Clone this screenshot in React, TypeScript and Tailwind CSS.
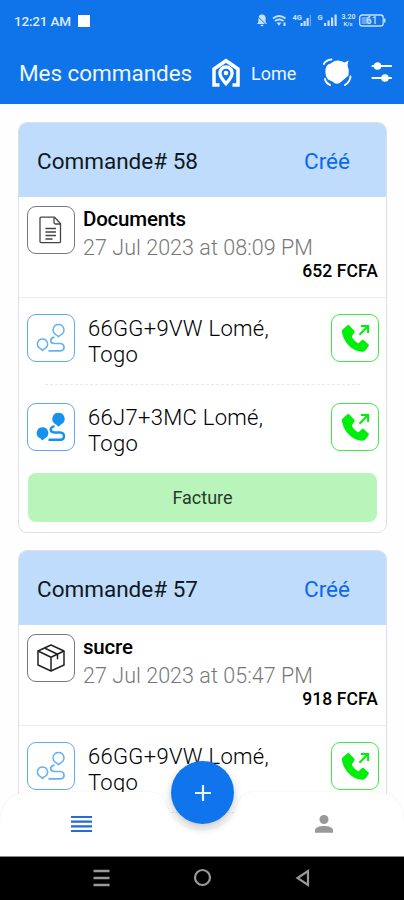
import type { ReactNode } from "react"

const orders = [
  {
    id: 58,
    title: "Documents",
    date: "27 Jul 2023 at 08:09 PM",
    price: "652 FCFA",
    kind: "doc",
    pickup: "66GG+9VW",
    dropoff: "66J7+3MC",
  },
  {
    id: 57,
    title: "sucre",
    date: "27 Jul 2023 at 05:47 PM",
    price: "918 FCFA",
    kind: "box",
    pickup: "66GG+9VW",
    dropoff: null,
  },
]

const StatusBar = () => (
  <div className="flex h-[42px] items-center pl-[14px] pr-[17px] text-[13.5px] text-[#dcebff]">
    <span className="w-[60px] whitespace-nowrap font-medium tracking-[-0.2px]">12:21 AM</span>
    <span className="ml-[4px] h-[12px] w-[12px] bg-white" />
    <svg className="ml-auto" width="132" height="16" viewBox="0 0 132 16" fill="#c9e0ff" fontFamily="Roboto">
      <path d="M7 1.5a3.600 3.600 0 0 1 3.600 3.600V9l1.400 2H2l1.400-2V5.100A3.600 3.600 0 0 1 7 1.500zM5.500 11.800h3a1.500 1.500 0 0 1-3 0z" />
      <path d="M1.500 2.500l10.500 10" stroke="#0f73ea" strokeWidth="1" />
      <path d="M18 5.500q6-5 12.500 0M20 8q4-3 8.500 0" stroke="#c9e0ff" strokeWidth="1.900" fill="none" />
      <path d="M21.500 9.500h5L24 12.800zM28.500 9.500h2v3.500h-2z" />
      <text x="37.500" y="6.800" fontSize="7.500" fontWeight="700">4G</text>
      <path d="M45.500 10h2.200v3h-2.200zM48.500 8h2.200v5h-2.200zM51.500 5h2.200v8h-2.200z" />
      <path d="M54.800 2h1.200v11h-1.200z" fillOpacity="0.5" />
      <text x="62.500" y="6.800" fontSize="7.500" fontWeight="700">G</text>
      <path d="M69 10h2.200v3H69zM72.500 7.500h2.200V13h-2.200zM76 4.500h2.200V13H76zM79.500 1.500h2.200V13h-2.200z" />
      <text x="86.500" y="6.200" fontSize="7" fontWeight="700">3.20</text>
      <text x="88.500" y="13.400" fontSize="6" fontWeight="700">K/s</text>
      <rect x="104.700" y="2" width="23.500" height="11" rx="2.500" fill="none" stroke="#c9e0ff" strokeWidth="1.300" />
      <rect x="106.500" y="4" width="9" height="7" fillOpacity="0.45" />
      <path d="M129 5.500h1.500v4H129z" />
      <text x="111" y="11.300" fontSize="10" fontWeight="500">61</text>
    </svg>
  </div>
)

const TopBar = () => (
  <div className="flex h-[62px] items-center pl-[19px] text-[#edf5ff]">
    <h1 className="w-[192px] whitespace-nowrap pt-px text-[22.5px] tracking-[-0.05px]">Mes commandes</h1>
    <svg width="30" height="30" viewBox="0 0 30 30" fill="none" stroke="white" strokeWidth="3.500">
      <path d="M8.500 27H3V11L15 2.700 27 11v16h-5.500" />
      <path
        d="M15 9a6.100 6.100 0 0 1 6.100 6.100c0 4.200-3.100 7.300-6.100 10.600-3-3.300-6.100-6.400-6.100-10.600A6.100 6.100 0 0 1 15 9z"
        strokeWidth="3.300"
      />
      <circle cx="15" cy="15" r="2.300" fill="white" stroke="none" />
    </svg>
    <span className="ml-[10px] w-[72px] text-[18px]">Lome</span>
    <svg width="30" height="30" viewBox="0 0 30 30">
      <path
        d="M9 4.500q4-3 9-1.500l3.500 1.500L25.500 2.500l-1 4.500q2 5 1 10.500-3.500 3-7 6-4.500 4.500-9 0-5.500-1.500-6.500-5.500-2-8 2-11.500 2-.5 4-2z"
        fill="white"
      />
      <path
        d="M.8 6Q3 1.800 8.500 1.500M2 21q.8 4 5 6M27.500 18.500q-.5 5.500-5.500 8.500"
        stroke="white"
        strokeWidth="1.900"
        fill="none"
        strokeLinecap="round"
      />
    </svg>
    <svg
      className="mb-[2px] ml-[17px]"
      width="23"
      height="24"
      viewBox="0 0 23 24"
      stroke="white"
      strokeWidth="2.200"
      fill="white"
      strokeLinecap="round"
    >
      <path d="M2.500 6h18.500M2.500 18h18.500" />
      <circle cx="7.500" cy="6" r="2.700" />
      <circle cx="15" cy="18" r="2.700" />
    </svg>
  </div>
)

const IconBox = ({ className, children }: { className: string; children: ReactNode }) => (
  <div className={`flex h-[48px] w-[48px] shrink-0 items-center justify-center rounded-[9px] border ${className}`}>
    {children}
  </div>
)

const DocIcon = () => (
  <svg width="24" height="30" viewBox="0 0 24 30" fill="none" stroke="#444" strokeWidth="1.300">
    <path d="M2.200 2.200h13.300l6 6.300v18q0 1.200-1.200 1.200H2.200Q1 27.700 1 26.500v-23q0-1.300 1.200-1.300z" />
    <path d="M15 2.500v5q0 1.500 1.500 1.500h5" />
    <path d="M6.500 13.500h10.500M6.500 17h10.500M6.500 20.500h10.500M6.500 24h7" strokeWidth="1.500" />
  </svg>
)

const BoxIcon = () => (
  <svg className="mr-px" width="30" height="30" viewBox="0 0 30 30" fill="none" stroke="#222" strokeWidth="1.500" strokeLinejoin="round">
    <path d="M15 2l13 6v14L15 28 2 22V8z" />
    <path d="M2 8l13 6.200L28 8M15 14.200V28M8.500 5l13 6.200v5" />
  </svg>
)

const RouteIcon = ({ filled = false }: { filled?: boolean }) => (
  <svg
    className="mr-px"
    width="30"
    height="30"
    viewBox="0 0 30 30"
    fill={filled ? "#1592ee" : "none"}
    stroke={filled ? "#1592ee" : "#64b2f2"}
    strokeWidth="1.500"
    strokeLinejoin="round"
  >
    <path d="M22.500 1.500a5.400 5.400 0 0 1 3 9.900q-1.900 1-3 2.400-1.100-1.400-3-2.400a5.400 5.400 0 0 1 3-9.900z" />
    <path d="M6.500 16.100a5 5 0 0 1 2.900 9.100q-1.800.9-2.900 2.300-1.100-1.400-2.900-2.300a5 5 0 0 1 2.900-9.100z" />
    <path
      d="M18.500 14.200q-3.800.8-3.800 3.400 0 2.700 3.500 2.900h6q3.800.2 3.800 3.800 0 3.500-3.500 3.500H12.500"
      fill="none"
      strokeWidth={filled ? "2.400" : "1.700"}
    />
  </svg>
)

const CallIcon = () => (
  <svg width="30" height="30" viewBox="0 0 30 30" fill="#00ee0c">
    <path d="M7.600 2.200L2.600 6.400Q1.700 7.200 1.900 8.700C3.200 18.500 11 27 20 28.600q2.400.4 4.400-.4 1-.4 1.700-1.400l2.700-4q.5-.8-.2-1.400l-5-4.300q-.8-.6-1.600 0l-2.900 2.700q-.8.600-1.700.1-3.600-2.200-5.200-5.400-.5-.9.1-1.700l2.200-3.500q.4-.8-.2-1.500L9.200 2.300q-.8-.8-1.600-.1z" />
    <path d="M19.500 11.700L27.500 3.500M20.800 2.900h7.300v7" fill="none" stroke="#00ee0c" strokeWidth="2" />
  </svg>
)

const Stop = ({ code, filled }: { code: string; filled?: boolean }) => (
  <div className="flex h-[48px] items-start pl-[8px] pr-[7px]">
    <IconBox className="border-[#5eaaf0]">
      <RouteIcon filled={filled} />
    </IconBox>
    <p className="ml-[13px] mt-[2px] flex-1 whitespace-nowrap text-[22px] font-light leading-[26px] tracking-[0.3px] text-black">
      {code} Lomé,
      <br />
      Togo
    </p>
    <IconBox className="border-[#41e94b]">
      <CallIcon />
    </IconBox>
  </div>
)

const OrderCard = ({ order }: { order: (typeof orders)[number] }) => (
  <article className="h-[411px] shrink-0 overflow-hidden rounded-[9px] border border-[#dce1e8] bg-white">
    <header className="mx-[-1px] mt-[-1px] flex h-[75px] items-center justify-between bg-[#bfdcfc] pl-[19px] pr-[37px] pt-[4px] text-[22.5px]">
      <h2 className="text-[#101820]">Commande# {order.id}</h2>
      <span className="text-[#0968ec]">Créé</span>
    </header>
    <div className="flex h-[101px] border-b border-[#eeeeee] pl-[8px] pr-[8px] pt-[9px]">
      <IconBox className="border-[#777]">{order.kind === "doc" ? <DocIcon /> : <BoxIcon />}</IconBox>
      <div className="ml-[8px] flex flex-1 flex-col">
        <h3 className="text-[20.5px] font-medium leading-[26px] tracking-[-0.2px] text-black">{order.title}</h3>
        <p className="mt-[2px] whitespace-nowrap text-[21.5px] font-light leading-[28px] tracking-[0.05px] text-[#777]">
          {order.date}
        </p>
        <p className="mt-[-3px] text-right text-[17.5px] font-medium leading-[24px] tracking-[0.1px] text-black">
          {order.price}
        </p>
      </div>
    </div>
    <div className="pt-[16px]">
      <Stop code={order.pickup} />
      <div className="mx-[26px] mt-[22px] border-t border-dashed border-[#e8e8e8]" />
    </div>
    {order.dropoff && (
      <>
        <div className="pt-[18px]">
          <Stop code={order.dropoff} filled />
        </div>
        <button className="ml-[9px] mt-[22px] block h-[49px] w-[349px] rounded-[8px] bg-[#b9f5bb] text-[18px] text-[#26392a]">
          Facture
        </button>
      </>
    )}
  </article>
)

const BottomNav = () => (
  <nav className="absolute inset-x-0 bottom-[44px] h-[96px]">
    <svg className="absolute inset-0 drop-shadow-[0_0_1px_rgba(0,0,0,0.07)]" width="404" height="96" viewBox="0 0 404 96">
      <path
        d="M0 96V65Q0 32 32 32H148Q163 32 167 46C175 78 229 78 237 46Q241 32 256 32H372Q404 32 404 65V96z"
        fill="white"
      />
    </svg>
    <div className="relative flex h-full items-end">
      <svg className="mb-[23px] ml-[71px]" width="21" height="18" viewBox="0 0 21 18" stroke="#266bd2" strokeWidth="2.200">
        <path d="M0 2h21M0 6.700h21M0 11.400h21M0 16h21" />
      </svg>
      <button className="mb-[32px] ml-[79px] flex h-[63px] w-[63px] items-center justify-center rounded-full bg-[#1074ec] shadow-[0_4px_9px_rgba(0,0,0,0.22)]">
        <svg width="18" height="18" viewBox="0 0 18 18" stroke="#eaf4ff" strokeWidth="2.200">
          <path d="M9 1v16M1 9h16" />
        </svg>
      </button>
      <svg className="mb-[22px] ml-[80px]" width="20" height="20" viewBox="0 0 20 20" fill="#999999">
        <circle cx="10" cy="5.500" r="4.500" />
        <path d="M1 18.800v-2.500C1 13.300 6 12 10 12s9 1.300 9 4.300v2.500z" />
      </svg>
    </div>
  </nav>
)

const SystemNav = () => (
  <div className="absolute inset-x-0 bottom-0 flex h-[44px] items-center border-t border-[#888] bg-black pb-[2px] pl-[93px]">
    <svg width="17" height="18" viewBox="0 0 17 18" stroke="#999" strokeWidth="2.700">
      <path d="M.5 2h16M.5 9h16M.5 16h16" />
    </svg>
    <svg className="ml-[83px]" width="19" height="19" viewBox="0 0 19 19" fill="none" stroke="#999" strokeWidth="2.200">
      <circle cx="9.500" cy="9.500" r="7.500" />
    </svg>
    <svg className="ml-[83px]" width="16" height="18" viewBox="0 0 16 18" fill="none" stroke="#999" strokeWidth="2.200">
      <path d="M13 2v14L2.500 9z" />
    </svg>
  </div>
)

const App = () => {
  return (
    <div className="relative flex h-[900px] w-[404px] flex-col overflow-hidden bg-[#fefefe] font-['Roboto',sans-serif]">
      <header className="h-[104px] shrink-0 bg-[#0f73ea]">
        <StatusBar />
        <TopBar />
      </header>
      <main className="flex min-h-0 flex-1 flex-col gap-[17px] overflow-hidden pl-[18px] pr-[17px] pt-[18px]">
        {orders.map((order) => (
          <OrderCard key={order.id} order={order} />
        ))}
      </main>
      <BottomNav />
      <SystemNav />
    </div>
  )
}

export default App
